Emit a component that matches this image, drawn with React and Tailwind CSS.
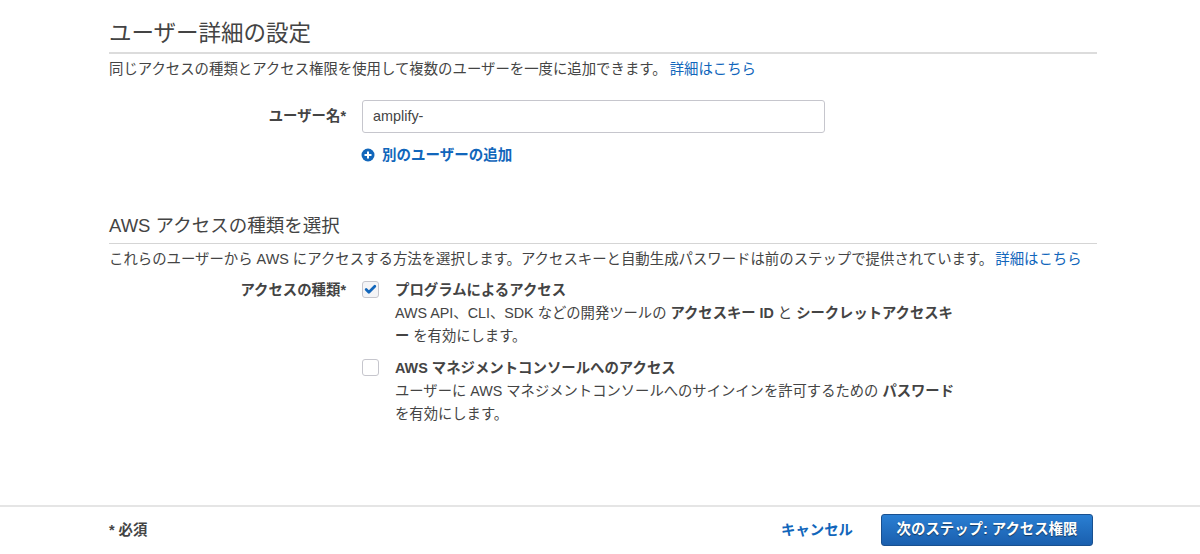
import { Check } from 'lucide-react'

const FONT = { fontFamily: '"Liberation Sans", "Noto Sans CJK JP", sans-serif' }

function Option({ checked, title, children }) {
  return (
    <div className="flex">
      <div className={`mt-[1px] w-[17px] h-[17px] rounded-[3px] border border-[#c6c6cd] flex items-center justify-center ${checked ? 'bg-[#f4f4f6]' : 'bg-white'}`}>
        {checked && <Check className="w-[13px] h-[13px] text-[#1166bb]" strokeWidth={5} />}
      </div>
      <div className="ml-[16px] w-[562px]">
        <div className="font-bold leading-[20px] text-[#444]">{title}</div>
        <div className="text-[14.32px] leading-[23px] mt-[2px] text-[#444]">{children}</div>
      </div>
    </div>
  )
}

export default function App() {
  return (
    <div className="w-[1200px] h-[554px] bg-white flex flex-col text-[14.4px] text-[#444] overflow-hidden" style={FONT}>
      <div className="flex-1 px-[109px] pr-[103px]">
        {/* user details */}
        <h2 className="pt-[20px] text-[22.5px] leading-[28px] pb-[4px] border-b-2 border-[#dcdcdc] text-[#444]">ユーザー詳細の設定</h2>
        <p className="mt-[5px] leading-[20px]">
          同じアクセスの種類とアクセス権限を使用して複数のユーザーを一度に追加できます。
          <a className="ml-[3px] text-[#1166bb]">詳細はこちら</a>
        </p>
        <div className="mt-[21px] flex items-center">
          <label className="w-[237px] text-right font-bold">ユーザー名*</label>
          <div className="ml-[16px] w-[463px] h-[33px] rounded-[3px] border border-[#c6c6cd] flex items-center px-[10px]">amplify-</div>
        </div>
        <a className="ml-[253px] mt-[12px] flex items-center text-[#1166bb] font-bold leading-[20px] text-[14.5px]">
          <svg viewBox="0 0 14 14" className="w-[14px] h-[14px] mr-[7px] -ml-[1px]">
            <circle cx="7" cy="7" r="6.5" fill="#1166bb" />
            <path d="M7 3.5v7M3.5 7h7" stroke="#fff" strokeWidth="2" />
          </svg>
          別のユーザーの追加
        </a>

        {/* access type */}
        <h3 className="mt-[49px] text-[18.5px] leading-[24px] pb-[5px] border-b border-[#d5d5d5]">AWS アクセスの種類を選択</h3>
        <p className="mt-[5px] leading-[20px] whitespace-nowrap">
          これらのユーザーから AWS にアクセスする方法を選択します。アクセスキーと自動生成パスワードは前のステップで提供されています。
          <a className="ml-[2px] text-[#1166bb]">詳細はこちら</a>
        </p>
        <div className="mt-[11px] flex">
          <label className="w-[237px] text-right font-bold leading-[20px]">アクセスの種類*</label>
          <div className="ml-[16px] flex flex-col gap-[10px]">
            <Option checked title="プログラムによるアクセス">
              AWS API、CLI、SDK などの開発ツールの <b>アクセスキー ID</b> と <b>シークレットアクセスキ</b><br /><b>ー</b> を有効にします。
            </Option>
            <Option title="AWS マネジメントコンソールへのアクセス">
              ユーザーに AWS マネジメントコンソールへのサインインを許可するための <b>パスワード</b><br />を有効にします。
            </Option>
          </div>
        </div>
      </div>

      {/* footer */}
      <div className="h-[49px] pb-[2px] border-t-2 border-[#e5e5e5] flex items-center pl-[109px] pr-[107px]">
        <span className="font-bold mt-[3px]">* 必須</span>
        <a className="ml-auto text-[#1166bb] font-bold mt-[2px]">キャンセル</a>
        <button className="ml-[28px] w-[212px] h-[32px] rounded-[3px] border border-[#19508f] bg-gradient-to-b from-[#2a7fd3] to-[#1a5fae] text-white font-bold [text-shadow:0_1px_1px_rgba(0,0,0,0.5)]">次のステップ: アクセス権限</button>
      </div>
    </div>
  )
}
